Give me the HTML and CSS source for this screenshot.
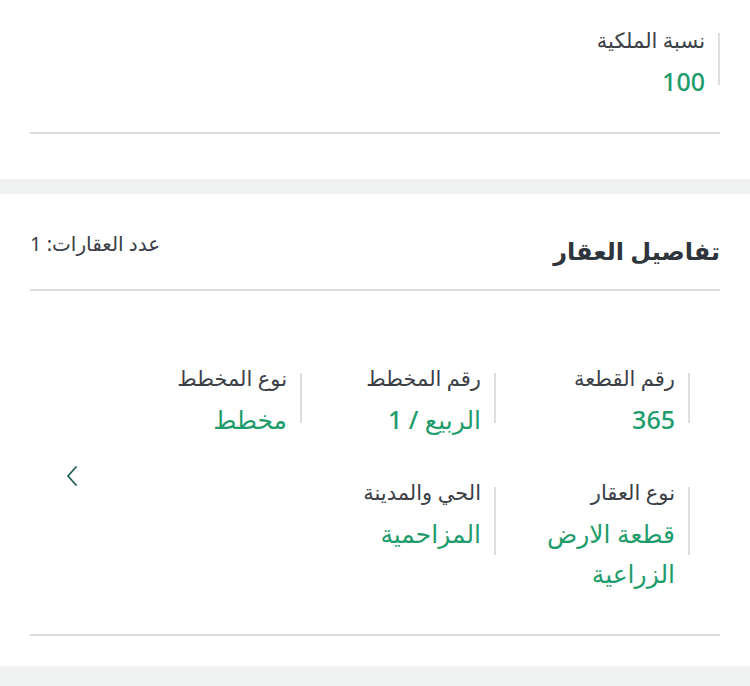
FILE: index.html
```
<!DOCTYPE html>
<html lang="ar" dir="rtl">
<head>
    <meta charset="UTF-8">
    <meta name="viewport" content="width=device-width, initial-scale=1.0">
    <title>تفاصيل العقار</title>
    <link rel="stylesheet" href="styles.css">
</head>
<body>

<div class="section owner-section">
    <div class="field">
        <div class="field-label">نسبة الملكية</div>
        <div class="field-value">100</div>
    </div>
    <div class="divider"></div>
</div>

<div class="section property-section">
    <div class="section-head">
        <h2 class="section-title">تفاصيل العقار</h2>
        <span class="count">عدد العقارات: 1</span>
    </div>
    <div class="divider head-divider"></div>

    <div class="slider">
        <div class="fields-grid">
            <div class="field">
                <div class="field-label">رقم القطعة</div>
                <div class="field-value">365</div>
            </div>
            <div class="field">
                <div class="field-label">رقم المخطط</div>
                <div class="field-value">الربيع / 1</div>
            </div>
            <div class="field">
                <div class="field-label">نوع المخطط</div>
                <div class="field-value">مخطط</div>
            </div>
            <div class="field">
                <div class="field-label">نوع العقار</div>
                <div class="field-value">قطعة الارض الزراعية</div>
            </div>
            <div class="field">
                <div class="field-label">الحي والمدينة</div>
                <div class="field-value">المزاحمية</div>
            </div>
        </div>
        <button class="next-btn" aria-label="التالي">
            <svg width="16" height="24" viewBox="0 0 16 24"><path d="M12 3 L4 12 L12 21" fill="none" stroke="#1d5e57" stroke-width="1.8" stroke-linecap="round" stroke-linejoin="round"/></svg>
        </button>
    </div>
    <div class="divider"></div>
</div>

<div class="bottom-band"></div>

</body>
</html>
```

FILE: styles.css
```
body {
    margin: 0;
    padding: 0;
    font-family: "Noto Sans", "DejaVu Sans", sans-serif;
    background-color: #f0f2f2;
    color: #3b4047;
}

.section {
    background-color: #ffffff;
    padding: 0 30px;
}

.owner-section {
    height: 179px;
    padding-top: 25px;
    box-sizing: border-box;
}

.property-section {
    margin-top: 15px;
    height: 472px;
    box-sizing: border-box;
    padding-top: 36px;
}

.divider {
    height: 2px;
    background-color: #dcdcdf;
}

.owner-section .divider {
    margin-top: 31px;
}

.field {
    position: relative;
    padding-right: 15px;
}

.field::before {
    content: "";
    position: absolute;
    right: 0;
    top: 8px;
    width: 2px;
    height: 52px;
    background-color: #dedede;
}

.field-label {
    font-size: 21px;
    line-height: 30px;
}

.field-value {
    font-size: 25px;
    line-height: 40px;
    margin-top: 6px;
    color: #1f9c6c;
    font-weight: 500;
}

.section-head {
    display: flex;
    justify-content: space-between;
    align-items: center;
    height: 40px;
}

.section-title {
    margin: 0;
    font-size: 24px;
    font-weight: bold;
    color: #2f353d;
}

.count {
    font-size: 20px;
    margin-top: -14px;
}

.head-divider {
    margin-top: 19px;
}

.slider {
    display: flex;
    align-items: center;
    height: 343px;
    padding-right: 30px;
}

.fields-grid {
    display: grid;
    grid-template-columns: repeat(3, 194px);
    row-gap: 38px;
    margin-top: 31px;
}

.fields-grid .field::before {
    top: 10px;
    height: 50px;
}

.fields-grid .field:nth-child(n+4)::before {
    height: 68px;
}

.fields-grid .field-value {
    width: 150px;
}

.next-btn {
    margin-right: auto;
    margin-left: 34px;
    margin-top: 29px;
    background: none;
    border: none;
    padding: 0;
    cursor: pointer;
}

.bottom-band {
    height: 20px;
}
```
